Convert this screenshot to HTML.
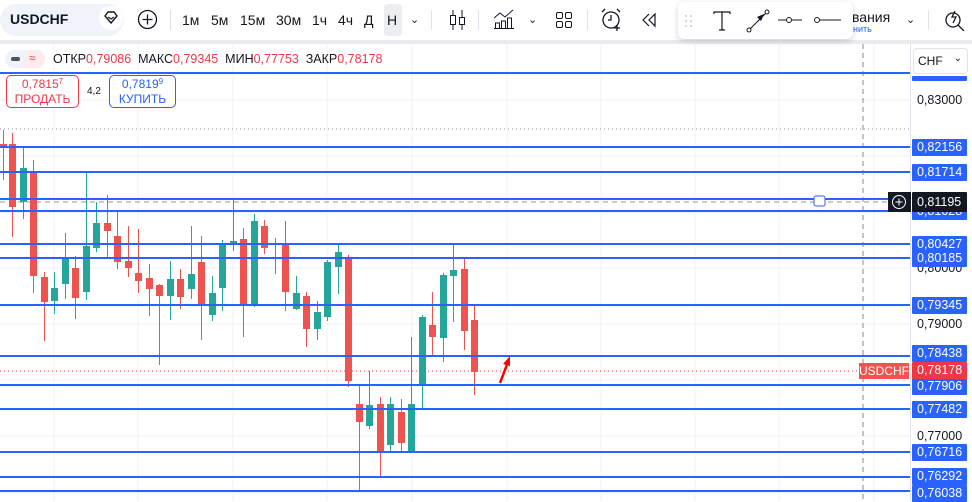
<!DOCTYPE html>
<html><head><meta charset="utf-8"><style>
*{margin:0;padding:0;box-sizing:border-box}
body{width:972px;height:501px;overflow:hidden;background:#fff;font-family:"Liberation Sans","DejaVu Sans",sans-serif;position:relative;color:#131722}
.tb{position:absolute;left:0;top:0;width:972px;height:40px;background:#fff}
.sep{position:absolute;left:0;top:40px;width:972px;height:4px;background:#e9ebef}
.t{position:absolute;font-size:14px;top:12px}
.ax{position:absolute;left:910px;top:44px;width:62px;height:457px;border-left:1px solid #e0e3eb;background:#fff}
.lbl{position:absolute;left:912px;width:55px;height:17px;background:#2962ff;color:#fff;font-size:12.5px;line-height:17px;padding-left:5px;border-radius:1px}
.plain{position:absolute;left:917px;font-size:12.5px;color:#131722}
.sb{position:absolute;top:75px;height:33px;border-radius:5px;background:#fff;text-align:center;font-size:12px;line-height:15px;padding-top:1px}
.sb i{font-style:normal;font-size:8px;vertical-align:top;line-height:10px}
</style></head><body>
<svg id="ch" width="972" height="501" style="position:absolute;left:0;top:0"></svg>
<div class="tb">
 <div style="position:absolute;left:0;top:4px;width:124px;height:32px;background:#f0f3fa;border-radius:16px"></div>
 <div style="position:absolute;left:10px;top:11px;font-size:14px;font-weight:bold">USDCHF</div>
 <div style="position:absolute;left:99px;top:6px;width:24px;height:24px;border-radius:12px;background:#fff"></div>
 <svg style="position:absolute;left:103px;top:11px" width="16" height="14"><path d="M2 5 L5 1 H11 L14 5 L8 12 Z" fill="none" stroke="#131722" stroke-width="1.4"/><path d="M5 6 L8 8 L11 6" stroke="#131722" fill="none" stroke-width="1.2"/></svg>
 <svg style="position:absolute;left:137px;top:9px" width="21" height="21"><circle cx="10.5" cy="10.5" r="9" fill="none" stroke="#131722" stroke-width="1.3"/><path d="M10.5 5.5v10M5.5 10.5h10" stroke="#131722" stroke-width="1.3"/></svg>
 <div style="position:absolute;left:170px;top:10px;width:1px;height:20px;background:#e0e3eb"></div>
 <span class="t" style="left:182px">1м</span><span class="t" style="left:211px">5м</span><span class="t" style="left:240px">15м</span><span class="t" style="left:276px">30м</span><span class="t" style="left:312px">1ч</span><span class="t" style="left:338px">4ч</span><span class="t" style="left:364px">Д</span>
 <div style="position:absolute;left:384px;top:4px;width:18px;height:32px;background:#ebedf0;border-radius:4px"></div><span class="t" style="left:387px">Н</span>
 <span class="t" style="left:410px;font-size:11px;top:13px">⌄</span>
 <div style="position:absolute;left:431px;top:10px;width:1px;height:20px;background:#e0e3eb"></div>
 <svg style="position:absolute;left:449px;top:9px" width="18" height="22"><path d="M4 1v20M13 1v20" stroke="#131722"/><rect x="1.5" y="6.5" width="5" height="9" fill="#fff" stroke="#131722"/><rect x="10.5" y="8.5" width="5" height="7" fill="#fff" stroke="#131722"/></svg>
 <div style="position:absolute;left:478px;top:10px;width:1px;height:20px;background:#e0e3eb"></div>
 <svg style="position:absolute;left:493px;top:9px" width="22" height="20"><path d="M1 9l6-5 5 4 8-7" fill="none" stroke="#131722"/><path d="M2.5 19v-5h4v5M8.5 19v-7h4v7M14.5 19v-10h4v10M1 19.5h20" fill="none" stroke="#131722"/></svg>
 <span class="t" style="left:528px;font-size:11px;top:13px">⌄</span>
 <svg style="position:absolute;left:555px;top:11px" width="18" height="18"><rect x="1.5" y="1.5" width="6" height="6" rx="1.5" fill="none" stroke="#131722"/><rect x="10.5" y="1.5" width="6" height="6" rx="1.5" fill="none" stroke="#131722"/><rect x="1.5" y="10.5" width="6" height="6" rx="1.5" fill="none" stroke="#131722"/><rect x="10.5" y="10.5" width="6" height="6" rx="1.5" fill="none" stroke="#131722"/></svg>
 <div style="position:absolute;left:587px;top:10px;width:1px;height:20px;background:#e0e3eb"></div>
 <svg style="position:absolute;left:600px;top:8px" width="24" height="24"><circle cx="11" cy="12" r="8" fill="none" stroke="#131722" stroke-width="1.3"/><path d="M11 7v5H8M2 4l3-3M20 4l-3-3M17 17v6M14 20h6" stroke="#131722" fill="none" stroke-width="1.3"/></svg>
 <svg style="position:absolute;left:641px;top:12px" width="16" height="16"><path d="M8 2L2 8l6 6M14 2L8 8l6 6Z" fill="none" stroke="#131722" stroke-width="1.2"/></svg>
 <div style="position:absolute;left:852px;top:9px;font-size:14px">вания</div>
 <div style="position:absolute;left:853px;top:24px;font-size:9px;color:#2962ff">нить</div>
 <span class="t" style="left:906px;font-size:11px;top:13px">⌄</span>
 <div style="position:absolute;left:928px;top:10px;width:1px;height:20px;background:#e0e3eb"></div>
 <svg style="position:absolute;left:944px;top:9px" width="22" height="22"><circle cx="9" cy="11" r="7" fill="none" stroke="#131722" stroke-width="1.3"/><path d="M14 16l6 6M11 2l-3 6h4l-3 6" stroke="#131722" fill="none" stroke-width="1.3"/></svg>
</div>
<div class="sep"></div>
<div style="position:absolute;left:678px;top:2px;width:175px;height:37px;background:#fff;border-radius:6px;box-shadow:0 2px 6px rgba(0,0,0,.18)">
 <svg style="position:absolute;left:6px;top:12px" width="10" height="14"><g fill="#c8ccd6"><circle cx="2" cy="2" r="1"/><circle cx="7" cy="2" r="1"/><circle cx="2" cy="7" r="1"/><circle cx="7" cy="7" r="1"/><circle cx="2" cy="12" r="1"/><circle cx="7" cy="12" r="1"/></g></svg>
 <svg style="position:absolute;left:35px;top:9px" width="18" height="20"><path d="M1 3V1h16v2M9 1v18M6 19h6" fill="none" stroke="#131722" stroke-width="1.2"/></svg>
 <svg style="position:absolute;left:68px;top:7px" width="24" height="24"><circle cx="3" cy="21" r="2" fill="none" stroke="#131722"/><circle cx="21" cy="3" r="2" fill="none" stroke="#131722"/><path d="M4.5 19.5L19.5 4.5" stroke="#131722"/><path d="M18 5l-7 3 4 4z" fill="#131722"/></svg>
 <svg style="position:absolute;left:100px;top:14px" width="24" height="8"><path d="M0 4h8M14 4h10" stroke="#131722"/><circle cx="11" cy="4" r="2.5" fill="none" stroke="#131722"/></svg>
 <svg style="position:absolute;left:136px;top:14px" width="28" height="8"><path d="M5 4h22" stroke="#131722"/><circle cx="3" cy="4" r="2.5" fill="none" stroke="#131722"/></svg>
</div>
<div style="position:absolute;left:5px;top:50px;width:40px;height:18px;background:#f0f3fa;border-radius:9px"></div>
<div style="position:absolute;left:26px;top:50px;width:19px;height:18px;background:#fdecef;border-radius:0 9px 9px 0"></div>
<div style="position:absolute;left:11px;top:57px;width:9px;height:4px;background:#50535e;border-radius:2px"></div>
<div style="position:absolute;left:29px;top:51px;font-size:12px;color:#f23645">≈</div>
<div style="position:absolute;left:53px;top:52px;font-size:12.5px;color:#131722;white-space:nowrap">ОТКР<span style="color:#f23645">0,79086</span>&nbsp; МАКС<span style="color:#f23645">0,79345</span>&nbsp; МИН<span style="color:#f23645">0,77753</span>&nbsp; ЗАКР<span style="color:#f23645">0,78178</span></div>
<div class="sb" style="left:6px;width:73px;border:1px solid #f23645;color:#f23645">0,7815<i>7</i><br>ПРОДАТЬ</div>
<div style="position:absolute;left:87px;top:86px;font-size:10px">4,2</div>
<div class="sb" style="left:109px;width:67px;border:1px solid #2962ff;color:#2962ff">0,7819<i>9</i><br>КУПИТЬ</div>
<div class="ax"></div>
<div style="position:absolute;left:913px;top:48px;width:55px;height:26px;border:1px solid #e0e3eb;border-radius:4px;background:#fff;font-size:12px;padding:5px 0 0 4px">CHF<span style="position:absolute;right:5px;top:4px;font-size:10px">⌄</span></div>
<div class="lbl" style="top:76px;height:5px"></div>
<div class="plain" style="top:93px">0,83000</div>
<div class="plain" style="top:317px">0,79000</div>
<div class="plain" style="top:429px">0,77000</div>
<div class="plain" style="top:261px">0,80000</div>
<div class="lbl" style="top:139px">0,82156</div>
<div class="lbl" style="top:164px">0,81714</div>
<div class="lbl" style="top:203px">0,81028</div>
<div class="lbl" style="top:236px">0,80427</div>
<div class="lbl" style="top:250px">0,80185</div>
<div class="lbl" style="top:297px">0,79345</div>
<div class="lbl" style="top:345px">0,78438</div>
<div class="lbl" style="top:378px">0,77906</div>
<div class="lbl" style="top:401px">0,77482</div>
<div class="lbl" style="top:444px">0,76716</div>
<div class="lbl" style="top:468px">0,76292</div>
<div class="lbl" style="top:485px">0,76038</div>
<div class="lbl" style="top:362px;background:#f23645">0,78178</div>
<div style="position:absolute;left:859px;top:363px;width:50px;height:16px;background:#f05350;color:#fff;font-size:12px;line-height:16px;text-align:center">USDCHF</div>
<div class="lbl" style="top:192px;background:#131722;height:20px;line-height:20px">0,81195</div>
<div style="position:absolute;left:888px;top:192px;width:23px;height:20px;background:#131722"></div>
<svg style="position:absolute;left:891px;top:194px" width="16" height="16"><circle cx="8" cy="8" r="6.5" fill="none" stroke="#fff"/><path d="M8 4.5v7M4.5 8h7" stroke="#fff"/></svg>
<script>
var s='';
[54,138,233,327,412,507,601,695,779,874].forEach(x=>s+=`<line x1="${x}" y1="44" x2="${x}" y2="501" stroke="#f0f1f4"/>`);
[100,156,212,268,324,380,436,492].forEach(y=>s+=`<line x1="0" y1="${y}" x2="910" y2="${y}" stroke="#f0f1f4"/>`);
s+=`<line x1="0" y1="129" x2="910" y2="129" stroke="#999" stroke-dasharray="1,3"/>`;
s+=`<line x1="863" y1="44" x2="863" y2="501" stroke="#888" stroke-dasharray="5,4"/>`;
s+=`<line x1="0" y1="202" x2="888" y2="202" stroke="#999" stroke-dasharray="5,4"/>`;
s+=`<line x1="0" y1="371" x2="859" y2="371" stroke="#f23645" stroke-dasharray="1,3"/>`;
var C=[
[0,'r',144,146,130,180],[9,'r',144,207,133,237],[20,'g',168,202,148,219],[30,'r',172,276,160,293],[41,'r',277,302,272,341],[51,'g',288,301,272,314],[62,'g',259,284,233,299],[72,'r',268,298,256,319],[83,'g',246,292,173,300],[93,'g',223,248,202,252],[104,'r',223,231,195,257],[114,'r',236,262,211,269],[125,'r',261,268,226,277],[135,'r',273,281,229,293],[146,'r',278,289,264,316],[156,'r',285,296,284,365],[167,'g',279,296,261,320],[177,'r',279,297,269,309],[188,'g',274,289,226,299],[198,'r',262,306,236,340],[209,'g',293,315,276,321],[219,'g',244,288,240,311],[230,'g',241,244,200,251],[240,'r',239,304,228,337],[251,'g',221,306,214,307],[261,'r',226,248,220,254],[272,'g',243,245,238,274],[282,'r',245,292,221,311],[293,'g',293,309,276,310],[303,'r',296,329,292,347],[314,'g',312,329,301,340],[324,'g',262,317,260,321],[335,'g',252,267,245,294],[345,'r',257,381,255,387],[356,'r',404,422,384,490],[366,'g',405,426,371,429],[377,'r',404,451,397,477],[387,'g',404,445,397,451],[398,'r',412,443,399,453],[408,'g',404,452,337,452],[419,'g',317,386,315,409],[429,'r',325,337,292,357],[440,'g',275,338,273,362],[450,'g',270,276,245,322],[461,'r',269,331,259,350],[471,'r',320,372,306,395]];
C.forEach(c=>{var col=c[1]=='r'?'#ef5350':'#26a69a';s+=`<line x1="${c[0]+3.5}" y1="${c[4]}" x2="${c[0]+3.5}" y2="${c[5]}" stroke="${col}"/><rect x="${c[0]}" y="${c[2]}" width="7" height="${Math.max(2,c[3]-c[2])}" fill="${col}"/>`});
[73,147,172,199,211,244,258,305,356,385,409,452,477,491].forEach(y=>s+=`<line x1="0" y1="${y}" x2="910" y2="${y}" stroke="#2962ff" stroke-width="2"/>`);
s+=`<path d="M500 383L508 362" stroke="#f00" stroke-width="2.5"/><path d="M510 356L503 364L510 366Z" fill="#f00"/>`;
s+=`<rect x="814" y="196" width="11" height="10" rx="2" fill="#fff" stroke="#2962ff"/>`;
document.getElementById('ch').innerHTML=s;
</script>
</body></html>
